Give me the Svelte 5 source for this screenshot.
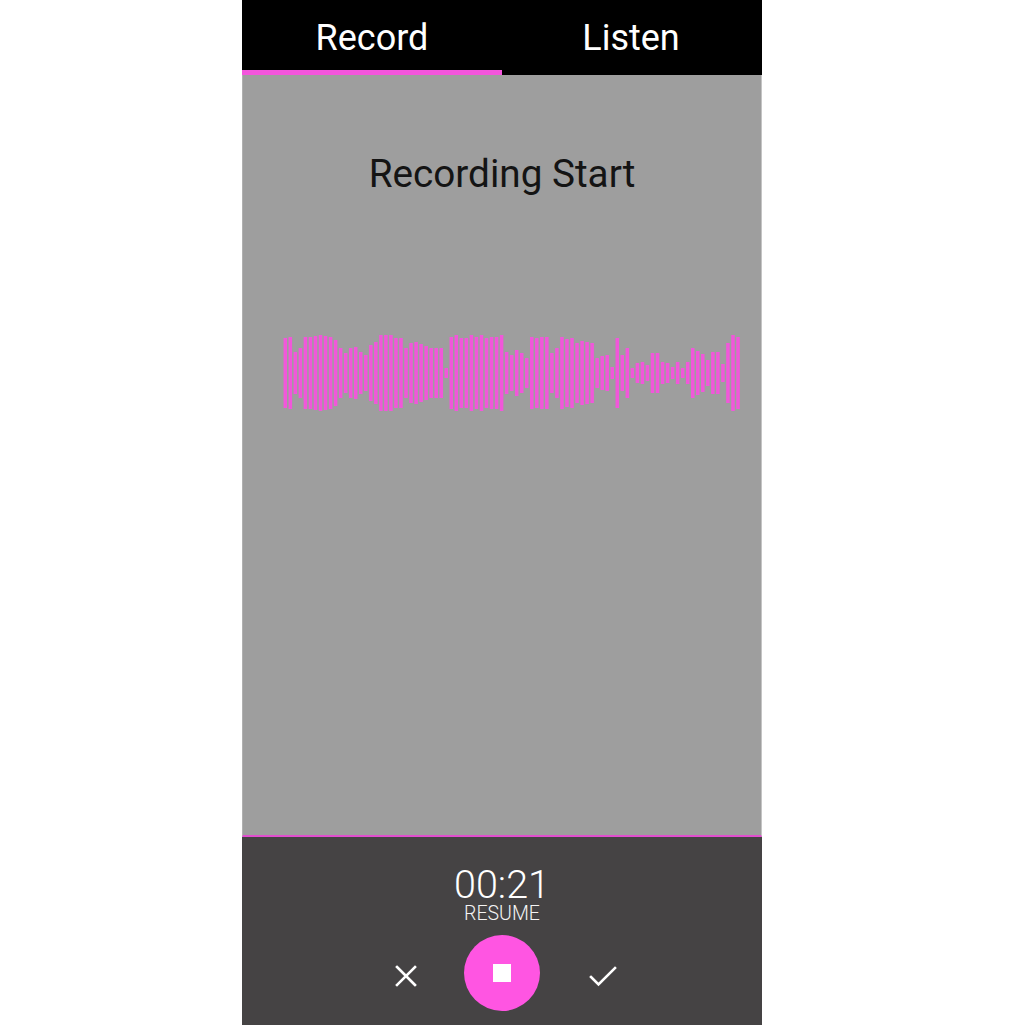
<script>
  const bars = [35,36,21,25,36,36,37,38,37,36,33,25,20,25,26,21,18,28,31,38,38,38,35,
    35,25,30,31,29,27,25,25,25,5,36,38,35,35,38,36,38,35,36,36,38,21,18,23,
    20,15,36,35,36,36,20,25,36,34,35,30,32,31,30,15,17,18,6,35,18,25,5,10,
    11,8,20,20,11,10,6,11,5,11,25,22,19,13,21,21,9,30,38,36];
</script>

<div class="screen">
  <header class="tabs">
    <div class="tab active">Record</div>
    <div class="tab">Listen</div>
  </header>
  <main class="stage">
    <h1>Recording Start</h1>
    <svg class="wave" viewBox="0 0 460 80" width="460" height="80" aria-label="Waveform">
      {#each bars as half, i}
        <rect x={0.55 + i * 5.03} y={40 - half} width="3.5" height={half * 2} />
      {/each}
    </svg>
  </main>
  <footer class="controls">
    <div class="time">00:21</div>
    <div class="state">RESUME</div>
    <div class="actions">
      <button class="icon close" aria-label="Discard">
        <svg viewBox="0 0 24 24" width="24" height="24"><path d="M3 3 21 21M21 3 3 21" /></svg>
      </button>
      <button class="stop" aria-label="Stop"><span></span></button>
      <button class="icon done" aria-label="Save">
        <svg viewBox="0 0 28 24" width="28" height="24"><path d="M2 13 9.5 20.5 26 4" /></svg>
      </button>
    </div>
  </footer>
</div>

<style>
  :global(body) { margin: 0; background: #fff; }
  .screen {
    width: 520px;
    height: 1025px;
    margin-left: 242px;
    display: flex;
    flex-direction: column;
    font-family: Roboto, "Liberation Sans", sans-serif;
  }
  .tabs { display: flex; height: 75px; background: #000; flex: none; }
  .tab {
    flex: 0 0 50%;
    box-sizing: border-box;
    color: #fff;
    font-size: 36px;
    text-align: center;
    line-height: 77px;
    height: 75px;
  }
  .tab:last-child { padding-right: 2px; }
  .tab.active { border-bottom: 5px solid #f355dc; }
  .stage {
    flex: 1;
    background: #9e9e9e;
    border-bottom: 2px solid #e24fd0;
    border-right: 1px solid #c4c4c4;
    border-left: 1px solid #b0b0b0;
    display: flex;
    flex-direction: column;
  }
  h1 {
    margin: 77px 0 0;
    font-size: 38.7px;
    font-weight: 400;
    line-height: 44px;
    text-align: center;
    color: #141414;
  }
  .wave {
    display: block;
    margin: 137px 0 0 40px;
    flex: none;
    fill: #f157da;
  }
  .controls {
    flex: none;
    height: 188px;
    background: #454344;
    color: #fff;
    display: flex;
    flex-direction: column;
    align-items: center;
  }
  .time { font-size: 39.5px; font-weight: 300; line-height: 40px; margin-top: 28px; }
  .state { font-size: 19.5px; font-weight: 300; line-height: 18px; color: #f4f4f4; }
  .actions { display: flex; align-items: center; gap: 44px; margin-top: 12px; }
  button { border: 0; padding: 0; background: none; display: flex; align-items: center; justify-content: center; }
  .icon { height: 30px; margin-top: 5px; }
  .close { width: 28px; margin-left: 10px; }
  .done { width: 38px; }
  .icon svg { fill: none; stroke: #fff; stroke-width: 2.6; stroke-linecap: square; }
  .stop { width: 76px; height: 76px; border-radius: 50%; background: #ff55e2; }
  .stop span { width: 18px; height: 18px; background: #fff; }
</style>
